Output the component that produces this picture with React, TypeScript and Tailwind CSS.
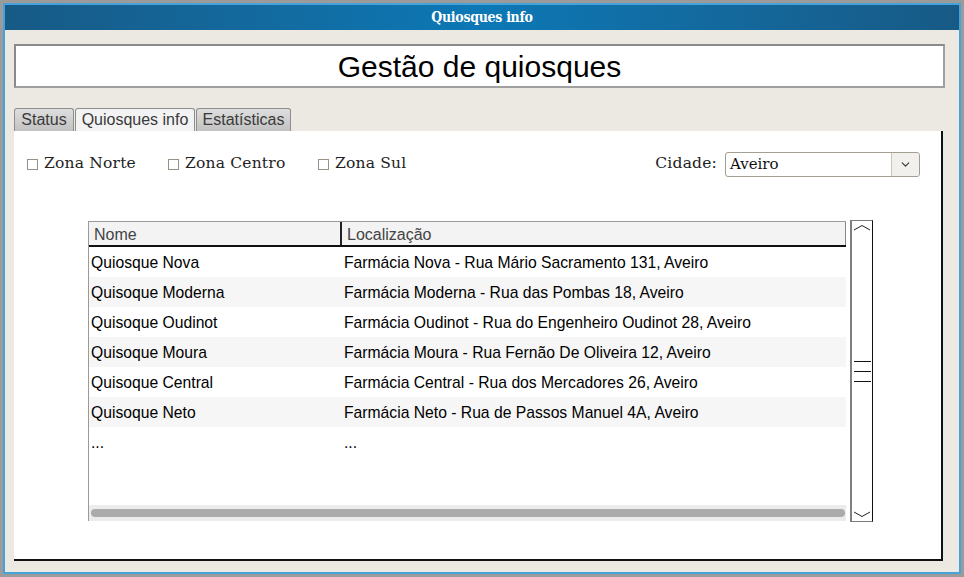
import { ChevronDown } from 'lucide-react'

const rows = [
  ['Quiosque Nova', 'Farmácia Nova - Rua Mário Sacramento 131, Aveiro'],
  ['Quisoque Moderna', 'Farmácia Moderna - Rua das Pombas 18, Aveiro'],
  ['Quisoque Oudinot', 'Farmácia Oudinot - Rua do Engenheiro Oudinot 28, Aveiro'],
  ['Quisoque Moura', 'Farmácia Moura - Rua Fernão De Oliveira 12, Aveiro'],
  ['Quisoque Central', 'Farmácia Central - Rua dos Mercadores 26, Aveiro'],
  ['Quisoque Neto', 'Farmácia Neto - Rua de Passos Manuel 4A, Aveiro'],
  ['...', '...'],
]

const zones = [
  { label: 'Zona Norte', w: 'w-[141px]' },
  { label: 'Zona Centro', w: 'w-[150px]' },
  { label: 'Zona Sul', w: 'w-auto' },
]

function Tab({ label, active, w }: { label: string; active?: boolean; w: string }) {
  return (
    <div
      className={`${w} h-[23px] flex items-center justify-center rounded-t-[3px] border border-b-0 border-[#8e8e8e] text-[16px] text-[#3a3a3a] ${
        active ? 'bg-[#f3f3f3]' : 'bg-gradient-to-b from-[#dedede] to-[#c2c2c2]'
      }`}
    >
      {label}
    </div>
  )
}

function ScrollWidget() {
  return (
    <div className="w-[23px] h-[302px] mt-[-1px] bg-white border-t border-b border-l-2 border-r border-t-[#7a7a7a] border-b-[#7a7a7a] border-l-[#808080] border-r-[#111] flex flex-col items-center justify-between py-[3px]">
      <svg width="18" height="8" viewBox="0 0 18 8">
        <path d="M1 6 L9 1.5 L17 6" fill="none" stroke="#222" strokeWidth="1" />
      </svg>
      <div className="flex flex-col gap-[9px]">
        <div className="w-[17px] h-px bg-[#111]" />
        <div className="w-[17px] h-px bg-[#111]" />
        <div className="w-[17px] h-px bg-[#111]" />
      </div>
      <svg width="18" height="8" viewBox="0 0 18 8">
        <path d="M1 2 L9 6.5 L17 2" fill="none" stroke="#222" strokeWidth="1" />
      </svg>
    </div>
  )
}

export default function App() {
  return (
    <div className="w-[964px] h-[577px] bg-[#9b9b9b] p-[3px] font-['Liberation_Sans',Arial,sans-serif]">
      <div className="h-full border-2 border-[#47a2da] bg-[#ece9e3] flex flex-col">
        <div className="h-[25px] shrink-0 bg-gradient-to-r from-[#175a86] via-[#0b78b5] to-[#175a86] flex items-center justify-center">
          <span className="text-white text-[14px] font-bold font-['DejaVu_Serif_Condensed','DejaVu_Serif',serif] tracking-[-0.3px]">
            Quiosques info
          </span>
        </div>

        <div className="flex-1 flex flex-col pl-[9px] pr-[14px] pt-[14px] pb-[11px]">
          <div className="h-[44px] bg-white border-2 border-t-[#8a8a8a] border-l-[#8a8a8a] border-r-[#a0a0a0] border-b-[#a0a0a0] flex items-center justify-center">
            <span className="text-[30px] text-black">Gestão de quiosques</span>
          </div>

          <div className="mt-[20px] flex items-end gap-[1px]">
            <Tab label="Status" w="w-[60px]" />
            <Tab label="Quiosques info" active w="w-[120px]" />
            <Tab label="Estatísticas" w="w-[95px]" />
          </div>

          <div className="flex-1 mr-[2px] bg-white border-r-2 border-b-2 border-r-[#111] border-b-[#111] flex flex-col">
            <div className="mt-[21px] h-[24px] flex items-center pl-[13px] pr-[21px] font-['DejaVu_Serif',serif] text-[15.5px] tracking-[0.2px] text-[#222]">
              {zones.map(z => (
                <div key={z.label} className={`${z.w} flex items-center gap-[6px]`}>
                  <div className="w-[11px] h-[11px] border border-[#9a9186] bg-white" />
                  <span>{z.label}</span>
                </div>
              ))}
              <div className="flex-1" />
              <span className="mr-[8px]">Cidade:</span>
              <div className="w-[195px] h-[25px] border border-[#a39d92] rounded-[3px] bg-white flex">
                <span className="flex-1 flex items-center pl-[4px] text-[15px] tracking-normal text-[#111]">Aveiro</span>
                <div className="w-[28px] border-l border-[#c9c5bd] bg-[#f1f0ec] rounded-r-[3px] flex items-center justify-center">
                  <ChevronDown size={13} strokeWidth={2} className="text-[#333]" />
                </div>
              </div>
            </div>

            <div className="mt-[45px] ml-[74px] flex gap-[4px]">
              <div className="w-[758px] h-[300px] border-l border-[#9a9a9a] flex flex-col">
                <div className="h-[26px] flex bg-[#f3f3f3] border-t border-[#9a9a9a] border-b-2 border-b-[#111] text-[16px] text-[#444]">
                  <div className="w-[253px] border-r-2 border-[#222] flex items-center pl-[5px] pt-[2px]">Nome</div>
                  <div className="flex-1 border-r border-[#888] flex items-center pl-[5px] pt-[2px]">Localização</div>
                </div>
                <div className="flex-1">
                  {rows.map((r, i) => (
                    <div
                      key={i}
                      className={`h-[30px] flex items-center pt-[1px] text-[15.7px] text-black ${i % 2 === 1 ? 'bg-[#f6f6f6]' : 'bg-white'}`}
                    >
                      <div className="w-[253px] pl-[2px]">{r[0]}</div>
                      <div className="flex-1 pl-[2px]">{r[1]}</div>
                    </div>
                  ))}
                </div>
                <div className="h-[16px] bg-[#ececec] flex items-center pl-[2px] pr-[1px]">
                  <div className="h-[8px] flex-1 rounded-full bg-[#ababab]" />
                </div>
              </div>
              <ScrollWidget />
            </div>
          </div>
        </div>
      </div>
    </div>
  )
}
